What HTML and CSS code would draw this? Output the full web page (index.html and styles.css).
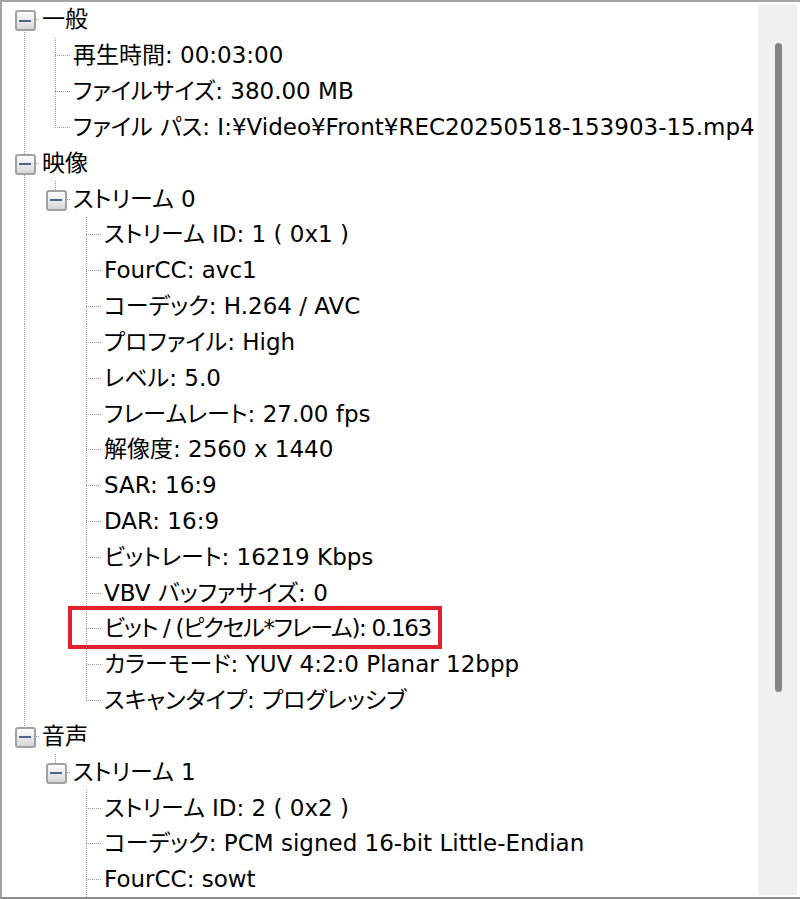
FILE: index.html
```html
<!DOCTYPE html>
<html lang="ja">
<head>
    <meta charset="UTF-8">
    <meta name="viewport" content="width=device-width, initial-scale=1.0">
    <title>メディア情報</title>
    <link rel="stylesheet" href="styles.css">
</head>
<body>
    <div class="view">
        <div class="tree">
            <!-- 一般 -->
            <div class="row">
                <div class="g g-first"><span class="toggle"></span></div>
                <span class="label">一般</span>
            </div>
            <div class="row">
                <div class="g g-pipe"></div><div class="g g-tee"></div>
                <span class="label">再生時間: 00:03:00</span>
            </div>
            <div class="row">
                <div class="g g-pipe"></div><div class="g g-tee"></div>
                <span class="label">ファイルサイズ: 380.00 MB</span>
            </div>
            <div class="row">
                <div class="g g-pipe"></div><div class="g g-elbow"></div>
                <span class="label">ファイル パス: I:¥Video¥Front¥REC20250518-153903-15.mp4</span>
            </div>

            <!-- 映像 -->
            <div class="row">
                <div class="g g-mid"><span class="toggle"></span></div>
                <span class="label">映像</span>
            </div>
            <div class="row">
                <div class="g g-pipe"></div><div class="g g-last"><span class="toggle"></span></div>
                <span class="label">ストリーム 0</span>
            </div>
            <div class="row">
                <div class="g g-pipe"></div><div class="g"></div><div class="g g-tee"></div>
                <span class="label">ストリーム ID: 1 ( 0x1 )</span>
            </div>
            <div class="row">
                <div class="g g-pipe"></div><div class="g"></div><div class="g g-tee"></div>
                <span class="label">FourCC: avc1</span>
            </div>
            <div class="row">
                <div class="g g-pipe"></div><div class="g"></div><div class="g g-tee"></div>
                <span class="label">コーデック: H.264 / AVC</span>
            </div>
            <div class="row">
                <div class="g g-pipe"></div><div class="g"></div><div class="g g-tee"></div>
                <span class="label">プロファイル: High</span>
            </div>
            <div class="row">
                <div class="g g-pipe"></div><div class="g"></div><div class="g g-tee"></div>
                <span class="label">レベル: 5.0</span>
            </div>
            <div class="row">
                <div class="g g-pipe"></div><div class="g"></div><div class="g g-tee"></div>
                <span class="label">フレームレート: 27.00 fps</span>
            </div>
            <div class="row">
                <div class="g g-pipe"></div><div class="g"></div><div class="g g-tee"></div>
                <span class="label">解像度: 2560 x 1440</span>
            </div>
            <div class="row">
                <div class="g g-pipe"></div><div class="g"></div><div class="g g-tee"></div>
                <span class="label">SAR: 16:9</span>
            </div>
            <div class="row">
                <div class="g g-pipe"></div><div class="g"></div><div class="g g-tee"></div>
                <span class="label">DAR: 16:9</span>
            </div>
            <div class="row">
                <div class="g g-pipe"></div><div class="g"></div><div class="g g-tee"></div>
                <span class="label">ビットレート: 16219 Kbps</span>
            </div>
            <div class="row">
                <div class="g g-pipe"></div><div class="g"></div><div class="g g-tee"></div>
                <span class="label">VBV バッファサイズ: 0</span>
            </div>
            <div class="row">
                <div class="g g-pipe"></div><div class="g"></div><div class="g g-tee"></div>
                <span class="label label-fit">ビット / (ピクセル*フレーム): 0.163</span>
                <span class="mark"></span>
            </div>
            <div class="row">
                <div class="g g-pipe"></div><div class="g"></div><div class="g g-tee"></div>
                <span class="label">カラーモード: YUV 4:2:0 Planar 12bpp</span>
            </div>
            <div class="row">
                <div class="g g-pipe"></div><div class="g"></div><div class="g g-elbow"></div>
                <span class="label">スキャンタイプ: プログレッシブ</span>
            </div>

            <!-- 音声 -->
            <div class="row">
                <div class="g g-end"><span class="toggle"></span></div>
                <span class="label">音声</span>
            </div>
            <div class="row">
                <div class="g"></div><div class="g g-last"><span class="toggle"></span></div>
                <span class="label">ストリーム 1</span>
            </div>
            <div class="row">
                <div class="g"></div><div class="g"></div><div class="g g-tee"></div>
                <span class="label">ストリーム ID: 2 ( 0x2 )</span>
            </div>
            <div class="row">
                <div class="g"></div><div class="g"></div><div class="g g-tee"></div>
                <span class="label">コーデック: PCM signed 16-bit Little-Endian</span>
            </div>
            <div class="row">
                <div class="g"></div><div class="g"></div><div class="g g-tee"></div>
                <span class="label">FourCC: sowt</span>
            </div>
        </div>
        <div class="scroll-track">
            <div class="scroll-thumb"></div>
        </div>
    </div>
</body>
</html>
```
FILE: styles.css
```css
html, body {
    margin: 0;
    padding: 0;
    background: #fff;
}
body {
    width: 800px;
    height: 899px;
    overflow: hidden;
}
.view {
    display: flex;
    box-sizing: border-box;
    width: 800px;
    height: 899px;
    border: 2px solid #a3a3a3;
    border-right: none;
    border-bottom-color: #8e8e8e;
    overflow: hidden;
    font-family: "DejaVu Sans", "Noto Sans CJK JP", sans-serif;
    font-size: 23px;
    font-feature-settings: "palt";
    color: #000;
}
.tree {
    flex: 1;
    padding-left: 7px;
    overflow: hidden;
}
.row {
    position: relative;
    display: flex;
    align-items: center;
    height: 35.83px;
    white-space: nowrap;
}
.label {
    padding-left: 2px;
    line-height: 1;
}
.label-fit {
    letter-spacing: -1.3px; /* 赤枠に収める */
}

/* tree guide cells, lines drawn as dotted backgrounds */
.g {
    flex: none;
    display: flex;
    align-items: center;
    justify-content: center;
    width: 31px;
    height: 100%;
    background-repeat: no-repeat;
}
.g-pipe {
    background-image: repeating-linear-gradient(to bottom, #9c9c9c 0 1px, transparent 1px 2px);
    background-position: 15px 0;
    background-size: 1px 100%;
}
.g-tee, .g-mid {
    background-image:
        repeating-linear-gradient(to bottom, #9c9c9c 0 1px, transparent 1px 2px),
        repeating-linear-gradient(to right, #9c9c9c 0 1px, transparent 1px 2px);
    background-position: 15px 0, 15px 50%;
    background-size: 1px 100%, 16px 1px;
}
.g-elbow, .g-last, .g-end {
    background-image:
        repeating-linear-gradient(to bottom, #9c9c9c 0 1px, transparent 1px 2px),
        repeating-linear-gradient(to right, #9c9c9c 0 1px, transparent 1px 2px);
    background-position: 15px 0, 15px 50%;
    background-size: 1px 50%, 16px 1px;
}
.g-first {
    background-image:
        repeating-linear-gradient(to bottom, #9c9c9c 0 1px, transparent 1px 2px),
        repeating-linear-gradient(to right, #9c9c9c 0 1px, transparent 1px 2px);
    background-position: 15px 100%, 15px 50%;
    background-size: 1px 50%, 16px 1px;
}

/* expand / collapse box */
.toggle {
    display: flex;
    align-items: center;
    justify-content: center;
    box-sizing: border-box;
    width: 21px;
    height: 21px;
    margin-top: 2px;
    margin-left: 1px;
    border: 2px solid #a2a2a2;
    border-radius: 3px;
    background: linear-gradient(to bottom, #fdfdfd, #e9e9e9 55%, #d6d6d6);
}
.toggle::before {
    content: "";
    width: 12px;
    height: 2px;
    background: #4f6489;
}

/* red annotation frame */
.mark {
    position: absolute;
    left: 59px;
    top: -5px;
    width: 374px;
    height: 43px;
    box-sizing: border-box;
    border: 4px solid #e3202b;
}

.scroll-track {
    flex: none;
    width: 39px;
    margin: 2px 3px 2px 0;
    background: #f0f0f0;
}
.scroll-thumb {
    width: 7px;
    height: 649px;
    margin-top: 39px;
    margin-left: 17px;
    border-radius: 4px;
    background: #858585;
}
```
